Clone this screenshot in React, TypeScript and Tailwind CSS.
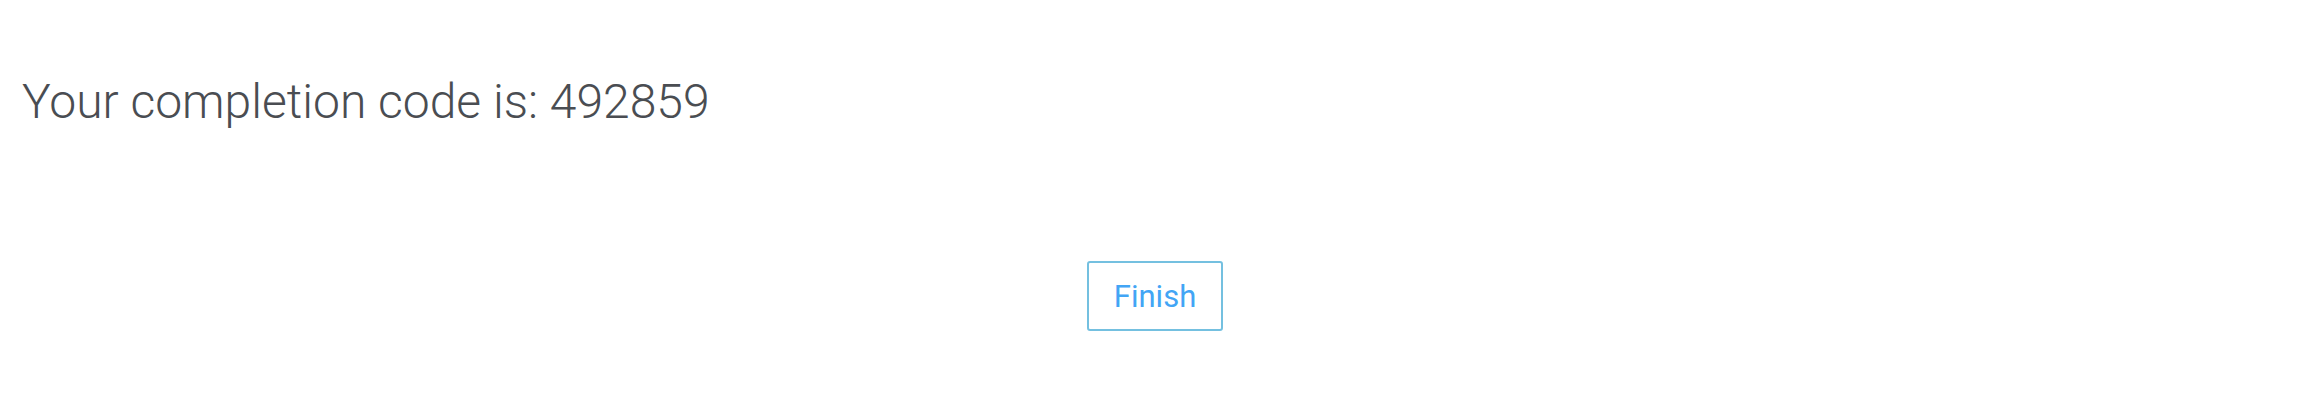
const App = () => (
  <div className="min-h-[402px] w-full bg-white" style={{ fontFamily: "Roboto, 'Noto Sans', sans-serif" }}>
    <div className="pt-[74px] pl-[22px]">
      <h1 className="text-[48px] font-light leading-[1.172] text-[#4a4d52]">Your completion code is: 492859</h1>
    </div>
    <div className="mt-[131px] flex justify-center">
      <button className="h-[70px] w-[136px] rounded-[3px] border-2 border-[#74c0e0] bg-white text-[31px] font-normal leading-none text-[#42a5f5]">
        Finish
      </button>
    </div>
  </div>
);

export default App;
